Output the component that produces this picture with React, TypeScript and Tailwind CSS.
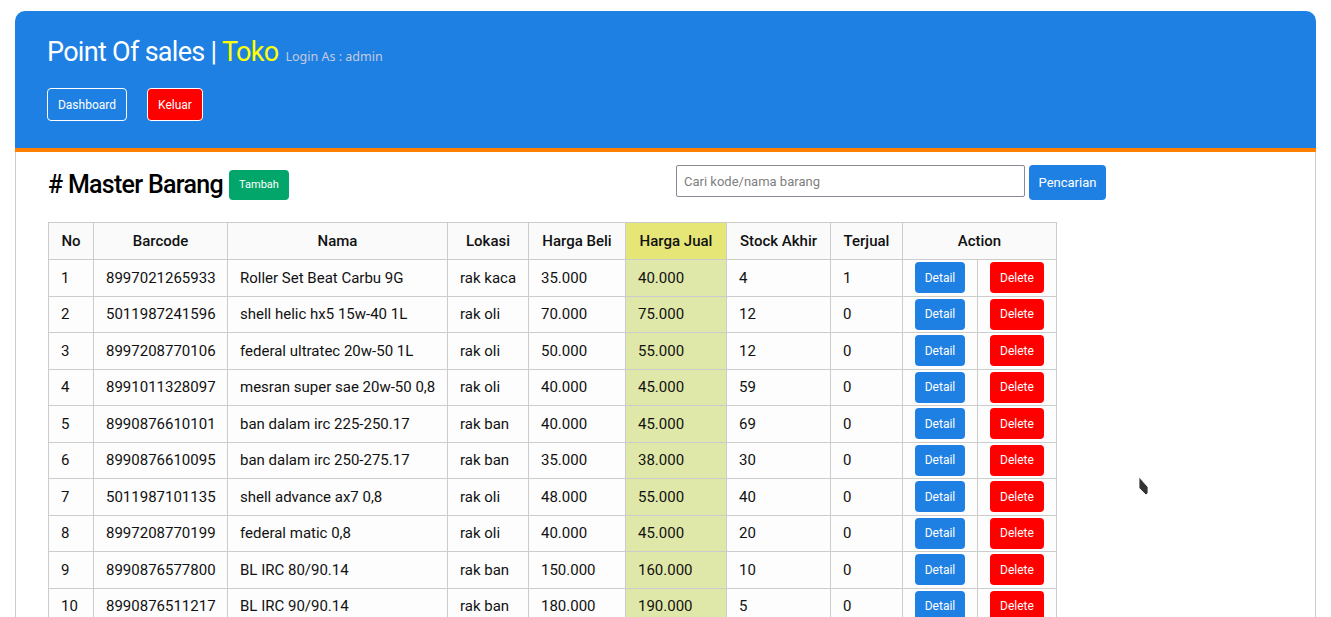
import React from "react";

const rows = [
  ["1", "8997021265933", "Roller Set Beat Carbu 9G", "rak kaca", "35.000", "40.000", "4", "1"],
  ["2", "5011987241596", "shell helic hx5 15w-40 1L", "rak oli", "70.000", "75.000", "12", "0"],
  ["3", "8997208770106", "federal ultratec 20w-50 1L", "rak oli", "50.000", "55.000", "12", "0"],
  ["4", "8991011328097", "mesran super sae 20w-50 0,8", "rak oli", "40.000", "45.000", "59", "0"],
  ["5", "8990876610101", "ban dalam irc 225-250.17", "rak ban", "40.000", "45.000", "69", "0"],
  ["6", "8990876610095", "ban dalam irc 250-275.17", "rak ban", "35.000", "38.000", "30", "0"],
  ["7", "5011987101135", "shell advance ax7 0,8", "rak oli", "48.000", "55.000", "40", "0"],
  ["8", "8997208770199", "federal matic 0,8", "rak oli", "40.000", "45.000", "20", "0"],
  ["9", "8990876577800", "BL IRC 80/90.14", "rak ban", "150.000", "160.000", "10", "0"],
  ["10", "8990876511217", "BL IRC 90/90.14", "rak ban", "180.000", "190.000", "5", "0"],
];

const headers = ["No", "Barcode", "Nama", "Lokasi", "Harga Beli", "Harga Jual", "Stock Akhir", "Terjual"];

export default function App() {
  return (
    <div className="relative min-h-screen bg-white px-[15px] pt-[11px] font-['Roboto',sans-serif]">
      {/* header */}
      <div className="rounded-t-[10px] bg-[#1e80e3] border-b-4 border-[#ff8000] pl-[32px] pt-[28px] h-[141px]">
        <div className="flex items-end">
          <h1 className="font-['Roboto',sans-serif] text-[27px] leading-[26px] font-normal tracking-[-0.7px] text-white">
            Point Of sales | <span className="text-[#ffff00]">Toko</span>
          </h1>
          <span className="ml-[7px] mb-[-2px] text-[12.5px] text-[#c4cbe0] font-['Noto_Sans',sans-serif]">Login As : admin</span>
        </div>
        <div className="mt-[23px] flex gap-[20px]">
          <button className="h-[33px] w-[80px] rounded-[4px] border border-white text-[12px] text-white">Dashboard</button>
          <button className="h-[33px] w-[56px] rounded-[4px] border border-white bg-[#ff0000] text-[12px] text-white">Keluar</button>
        </div>
      </div>

      {/* content */}
      <div className="border-x border-[#cccccc] pl-[32px] pb-10">
        <div className="flex items-start pt-[13px]">
          <div className="flex w-[628px] items-center pt-[5px]">
            <h2 className="font-['Roboto',sans-serif] text-[25px] leading-[30px] font-medium tracking-[-0.7px] text-black">
              # Master Barang
            </h2>
            <button className="ml-[6px] h-[30px] w-[60px] rounded-[4px] bg-[#03a66a] text-[11px] text-white">Tambah</button>
          </div>
          <input
            placeholder="Cari kode/nama barang"
            className="h-[32px] w-[349px] rounded-[2px] border border-[#8a8a95] px-[7px] text-[13px] placeholder:text-[#808080] outline-none"
          />
          <button className="ml-[4px] h-[35px] w-[77px] rounded-[4px] bg-[#1e80e3] text-[13px] text-white">Pencarian</button>
        </div>

        <table className="mt-[22px] w-[1009px] table-fixed border-collapse text-[15px] text-[#111]">
          <colgroup>
            <col className="w-[45px]" />
            <col className="w-[134px]" />
            <col className="w-[220px]" />
            <col className="w-[81px]" />
            <col className="w-[97px]" />
            <col className="w-[101px]" />
            <col className="w-[104px]" />
            <col className="w-[72px]" />
            <col className="w-[75px]" />
            <col className="w-[79px]" />
          </colgroup>
          <thead>
            <tr className="h-[37px] bg-[#fafafa]">
              {headers.map((h) => (
                <th
                  key={h}
                  className={`border border-[#cccccc] px-3 text-center font-medium whitespace-nowrap ${
                    h === "Harga Jual" ? "bg-[#e6e677]" : ""
                  }`}
                >
                  {h}
                </th>
              ))}
              <th colSpan={2} className="border border-[#cccccc] px-3 text-center font-medium">
                Action
              </th>
            </tr>
          </thead>
          <tbody>
            {rows.map((r) => (
              <tr key={r[0]} className="h-[36.5px] bg-[#fdfdfd]">
                {r.map((c, i) => (
                  <td
                    key={i}
                    className={`border border-[#cccccc] px-3 text-left whitespace-nowrap ${i === 5 ? "bg-[#dfe8a8]" : ""}`}
                  >
                    {c}
                  </td>
                ))}
                <td className="border border-[#cccccc] pl-3">
                  <button className="block h-[31px] w-[50px] rounded-[4px] bg-[#1e80e3] text-[12px] text-white">Detail</button>
                </td>
                <td className="border border-[#cccccc] pl-3">
                  <button className="block h-[31px] w-[54px] rounded-[4px] bg-[#ff0000] text-[12px] text-white">Delete</button>
                </td>
              </tr>
            ))}
          </tbody>
        </table>
      </div>

      {/* mouse cursor */}
      <svg className="absolute left-[1138px] top-[476px]" width="12" height="20" viewBox="0 0 12 20">
        <path d="M1 1 L1 12 L4 15 L8 19 L10 17 L10 11 Z" fill="#333" stroke="#fff" strokeWidth="0.8" />
      </svg>
    </div>
  );
}
